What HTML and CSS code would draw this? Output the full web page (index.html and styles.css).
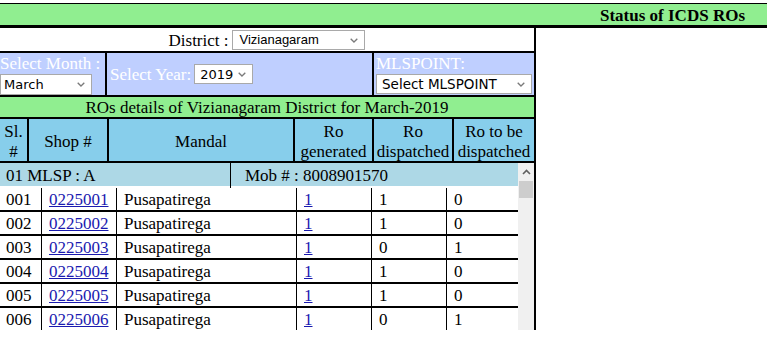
FILE: index.html
```html
<!DOCTYPE html>
<html>
<head>
<meta charset="utf-8">
<title>Status of ICDS ROs</title>
<link rel="stylesheet" href="styles.css">
</head>
<body>
<div class="topbar"><span class="title">Status of ICDS ROs</span></div>
<div class="panel">
  <div class="district">
    <span>District :</span>
    <span class="sel-wrap">
      <select class="sel sel-district"><option>Vizianagaram</option></select>
      <svg class="chev" width="8" height="5" viewBox="0 0 8 5"><path d="M0.7 0.7 L4 4 L7.3 0.7" fill="none" stroke="#7a7a7a" stroke-width="1.3"/></svg>
    </span>
  </div>
  <div class="filters">
    <div class="f-cell f-stack f-first">
      <span class="f-label">Select Month :</span>
      <span class="sel-wrap">
        <select class="sel sel-month"><option>March</option></select>
        <svg class="chev" width="8" height="5" viewBox="0 0 8 5"><path d="M0.7 0.7 L4 4 L7.3 0.7" fill="none" stroke="#7a7a7a" stroke-width="1.3"/></svg>
      </span>
    </div>
    <div class="f-cell f-inline">
      <span class="f-label">Select Year:</span>
      <span class="sel-wrap">
        <select class="sel sel-year"><option>2019</option></select>
        <svg class="chev" width="8" height="5" viewBox="0 0 8 5"><path d="M0.7 0.7 L4 4 L7.3 0.7" fill="none" stroke="#7a7a7a" stroke-width="1.3"/></svg>
      </span>
    </div>
    <div class="f-cell f-stack f-last">
      <span class="f-label">MLSPOINT:</span>
      <span class="sel-wrap">
        <select class="sel sel-mls"><option>Select MLSPOINT</option></select>
        <svg class="chev" width="8" height="5" viewBox="0 0 8 5"><path d="M0.7 0.7 L4 4 L7.3 0.7" fill="none" stroke="#7a7a7a" stroke-width="1.3"/></svg>
      </span>
    </div>
  </div>
  <div class="caption">ROs details of Vizianagaram District for March-2019</div>
  <div class="thead">
    <div class="th">Sl.<br>#</div>
    <div class="th">Shop #</div>
    <div class="th">Mandal</div>
    <div class="th">Ro<br>generated</div>
    <div class="th">Ro<br>dispatched</div>
    <div class="th th-last">Ro to be<br>dispatched</div>
  </div>
  <div class="scroller">
    <div class="scroll-body">
      <div class="group">
        <div class="g-cell g-first">01 MLSP : A</div>
        <div class="g-cell g-mob">Mob # : 8008901570</div>
      </div>
      <div class="row row-first">
        <div class="td td-first">001</div><div class="td"><a href="#">0225001</a></div><div class="td">Pusapatirega</div><div class="td"><a href="#">1</a></div><div class="td">1</div><div class="td">0</div>
      </div>
      <div class="row">
        <div class="td td-first">002</div><div class="td"><a href="#">0225002</a></div><div class="td">Pusapatirega</div><div class="td"><a href="#">1</a></div><div class="td">1</div><div class="td">0</div>
      </div>
      <div class="row">
        <div class="td td-first">003</div><div class="td"><a href="#">0225003</a></div><div class="td">Pusapatirega</div><div class="td"><a href="#">1</a></div><div class="td">0</div><div class="td">1</div>
      </div>
      <div class="row">
        <div class="td td-first">004</div><div class="td"><a href="#">0225004</a></div><div class="td">Pusapatirega</div><div class="td"><a href="#">1</a></div><div class="td">1</div><div class="td">0</div>
      </div>
      <div class="row">
        <div class="td td-first">005</div><div class="td"><a href="#">0225005</a></div><div class="td">Pusapatirega</div><div class="td"><a href="#">1</a></div><div class="td">1</div><div class="td">0</div>
      </div>
      <div class="row">
        <div class="td td-first">006</div><div class="td"><a href="#">0225006</a></div><div class="td">Pusapatirega</div><div class="td"><a href="#">1</a></div><div class="td">0</div><div class="td">1</div>
      </div>
    </div>
    <div class="sbar">
      <div class="sbar-btn"><svg width="9" height="6" viewBox="0 0 9 6"><path d="M1 5 L4.5 1.5 L8 5" fill="none" stroke="#606060" stroke-width="1.6"/></svg></div>
      <div class="sbar-thumb"></div>
    </div>
  </div>
</div>
</body>
</html>
```

FILE: styles.css
```css
* { box-sizing: border-box; }

body {
  margin: 0;
  font-family: "Liberation Serif", "Times New Roman", serif;
  font-size: 17px;
  color: #000;
  background: #fff;
}

.topbar {
  margin-top: 3px;
  height: 25px;
  border-top: 1px solid #000;
  border-bottom: 3px solid #000;
  background: #90ee90;
  display: flex;
  align-items: center;
  justify-content: flex-end;
  padding-right: 22px;
  padding-top: 2px;
}

.title {
  font-weight: bold;
  font-size: 17px;
}

.panel {
  width: 536px;
  border-right: 2px solid #000;
}

.district {
  height: 25px;
  border-bottom: 2px solid #000;
  display: flex;
  align-items: center;
  justify-content: center;
  gap: 4px;
}

.district > span:first-child {
  position: relative;
  top: 1px;
}

.sel-wrap {
  position: relative;
  display: inline-block;
  line-height: 0;
  align-self: flex-start;
}

.district .sel-wrap { align-self: center; }
.f-inline .sel-wrap { align-self: center; }

.sel {
  -webkit-appearance: none;
  appearance: none;
  margin: 0;
  border: 1px solid #a9a9a9;
  border-radius: 0;
  background: #fff;
  color: #000;
  font-family: "DejaVu Sans", Verdana, sans-serif;
  font-size: 13px;
  height: 20px;
  padding: 0 0 0 5px;
}

.chev {
  position: absolute;
  right: 7px;
  top: 8px;
}

.sel-district {
  width: 133px;
  font-family: "Liberation Sans", Arial, sans-serif;
  font-size: 13px;
  padding-left: 6px;
}
.sel-month { width: 92px; height: 21px; padding-left: 3px; }
.sel-year { width: 59px; }
.sel-mls { width: 156px; font-size: 13.5px; }

.filters {
  display: grid;
  grid-template-columns: 107px 267px 160px;
  height: 44px;
  border-bottom: 2px solid #000;
  background: #bfcfff;
  color: #fff;
}

.f-cell {
  border-right: 2px solid #000;
}

.f-last { border-right: none; }

.f-stack {
  display: flex;
  flex-direction: column;
  padding-left: 2px;
}

.f-stack .f-label {
  line-height: 22px;
  height: 21px;
  white-space: nowrap;
}

.f-first { padding-left: 0; }

.f-inline {
  display: flex;
  align-items: center;
  gap: 3px;
  padding-left: 3px;
}

.f-inline .f-label {
  position: relative;
  top: 1px;
}

.caption {
  height: 22px;
  line-height: 22px;
  border-bottom: 2px solid #000;
  background: #90ee90;
  text-align: center;
  white-space: nowrap;
}

.thead {
  display: grid;
  grid-template-columns: 29px 80px 186px 79px 80px 80px;
  height: 44px;
  border-bottom: 2px solid #000;
  background: #87ceeb;
}

.th {
  border-right: 2px solid #000;
  display: flex;
  align-items: center;
  justify-content: center;
  text-align: center;
  line-height: 20px;
  padding-top: 3px;
  white-space: nowrap;
}

.th-last { border-right: none; }

.scroller {
  display: flex;
  height: 167px;
  overflow: hidden;
}

.scroll-body {
  width: 518px;
  flex: none;
}

.group {
  display: grid;
  grid-template-columns: 231px 1fr;
  height: 23px;
  background: #add8e6;
}

.g-cell {
  line-height: 25px;
  padding-left: 6px;
}

.g-first { border-right: 1px solid #000; }
.g-mob { padding-left: 14px; }

.row {
  display: grid;
  grid-template-columns: 41px 75px 180px 75px 75px 72px;
  height: 24px;
  border-top: 2px solid #000;
}

.row-first { border-top-color: #fff; }

.td {
  border-left: 1px solid #000;
  padding-left: 7px;
  line-height: 24px;
  white-space: nowrap;
}

.td-first {
  border-left: none;
  padding-left: 6px;
}

.td a { color: #1a1ab0; }

.sbar {
  width: 16px;
  flex: none;
  background: #f0f0f0;
  display: flex;
  flex-direction: column;
  align-items: center;
}

.sbar-btn {
  height: 17px;
  display: flex;
  align-items: center;
  justify-content: center;
}

.sbar-thumb {
  width: 14px;
  height: 17px;
  margin-top: 1px;
  background: #cdcdcd;
}
```
